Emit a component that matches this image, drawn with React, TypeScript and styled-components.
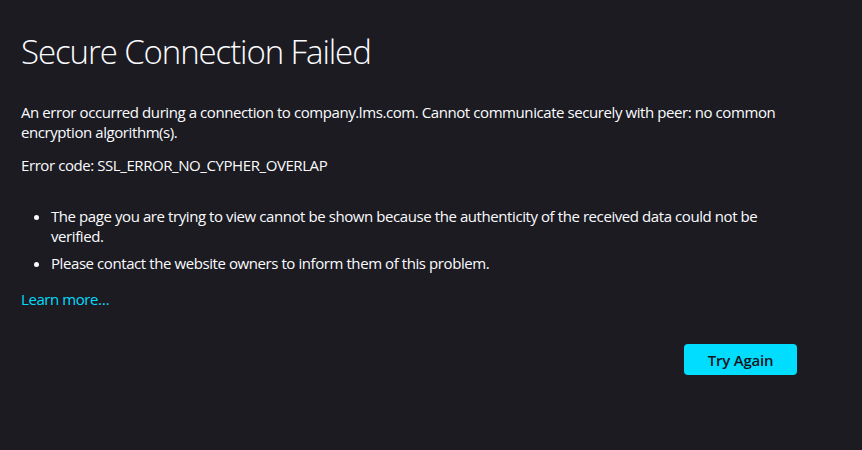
import React from "react";
import styled, { createGlobalStyle } from "styled-components";

const GlobalStyle = createGlobalStyle`
  html, body {
    margin: 0;
    padding: 0;
    background: #1c1b22;
  }
  body {
    font-family: "Open Sans", "Noto Sans", sans-serif;
    color: #fbfbfe;
  }
`;

const Page = styled.main`
  min-height: 450px;
  box-sizing: border-box;
  padding: 30px 0 0 21px;
  background: #1c1b22;
`;

const Container = styled.div`
  width: 776px;
  display: flex;
  flex-direction: column;
`;

const Title = styled.h1`
  margin: 0;
  font-size: 33px;
  font-weight: 300;
  line-height: 44px;
  letter-spacing: -1.1px;
  color: #fbfbfe;
`;

const Text = styled.p<{ $top: number }>`
  margin: ${(p) => p.$top}px 0 0;
  font-size: 15px;
  line-height: 20px;
  letter-spacing: -0.42px;
  color: #fbfbfe;
`;

const List = styled.ul`
  margin: 31px 0 0;
  padding: 0 0 0 30px;
  display: flex;
  flex-direction: column;
  gap: 7px;
`;

const Item = styled.li`
  font-size: 15px;
  line-height: 20px;
  letter-spacing: -0.42px;
  color: #fbfbfe;
`;

const Link = styled.a`
  margin-top: 16px;
  align-self: flex-start;
  font-size: 15px;
  line-height: 20px;
  letter-spacing: -0.42px;
  color: #00ddff;
  text-decoration: none;
  cursor: pointer;
`;

const Actions = styled.div`
  margin-top: 35px;
  display: flex;
  justify-content: flex-end;
`;

const Button = styled.button`
  width: 113px;
  height: 31px;
  border: none;
  border-radius: 4px;
  background: #00ddff;
  color: #15141a;
  font-family: "Open Sans", "Noto Sans", sans-serif;
  font-size: 15px;
  font-weight: 600;
  letter-spacing: -0.2px;
  padding: 0;
  cursor: pointer;
`;

export default function App() {
  return (
    <>
      <GlobalStyle />
      <Page>
        <Container>
          <Title>Secure Connection Failed</Title>
          <Text $top={28}>
            An error occurred during a connection to company.lms.com. Cannot communicate securely
            with peer: no common encryption algorithm(s).
          </Text>
          <Text $top={13}>Error code: SSL_ERROR_NO_CYPHER_OVERLAP</Text>
          <List>
            <Item>
              The page you are trying to view cannot be shown because the authenticity of the
              received data could not be verified.
            </Item>
            <Item>Please contact the website owners to inform them of this problem.</Item>
          </List>
          <Link>Learn more…</Link>
          <Actions>
            <Button>Try Again</Button>
          </Actions>
        </Container>
      </Page>
    </>
  );
}
